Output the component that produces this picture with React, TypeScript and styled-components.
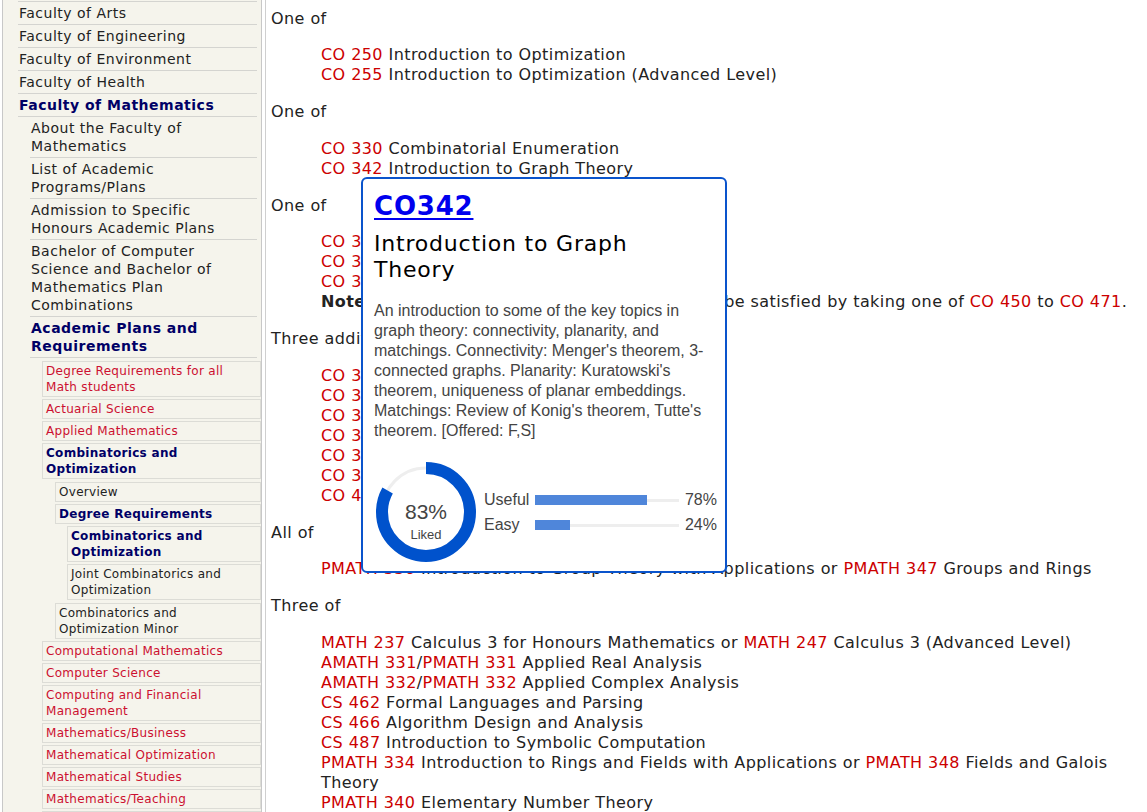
import React from "react";
import styled, { createGlobalStyle, css } from "styled-components";

const GlobalStyle = createGlobalStyle`
  html, body { margin: 0; padding: 0; background: #fff; }
  body {
    font-family: "DejaVu Sans", Verdana, sans-serif;
    color: #222;
    overflow: hidden;
  }
`;

type Variant = "plain" | "active" | "link";
interface NavNode {
  label: string;
  variant: Variant;
  children?: NavNode[];
}

const red = (label: string): NavNode => ({ label, variant: "link" });
const plain = (label: string): NavNode => ({ label, variant: "plain" });

const NAV: NavNode[] = [
  plain("Faculty of Arts"),
  plain("Faculty of Engineering"),
  plain("Faculty of Environment"),
  plain("Faculty of Health"),
  {
    label: "Faculty of Mathematics",
    variant: "active",
    children: [
      plain("About the Faculty of Mathematics"),
      plain("List of Academic Programs/Plans"),
      plain("Admission to Specific Honours Academic Plans"),
      plain("Bachelor of Computer Science and Bachelor of Mathematics Plan Combinations"),
      {
        label: "Academic Plans and Requirements",
        variant: "active",
        children: [
          red("Degree Requirements for all Math students"),
          red("Actuarial Science"),
          red("Applied Mathematics"),
          {
            label: "Combinatorics and Optimization",
            variant: "active",
            children: [
              plain("Overview"),
              {
                label: "Degree Requirements",
                variant: "active",
                children: [
                  { label: "Combinatorics and Optimization", variant: "active" },
                  plain("Joint Combinatorics and Optimization"),
                ],
              },
              plain("Combinatorics and Optimization Minor"),
            ],
          },
          red("Computational Mathematics"),
          red("Computer Science"),
          red("Computing and Financial Management"),
          red("Mathematics/Business"),
          red("Mathematical Optimization"),
          red("Mathematical Studies"),
          red("Mathematics/Teaching"),
          red("Pure Mathematics"),
          red("Statistics"),
        ],
      },
    ],
  },
];

type Seg = { c?: string; t?: string; b?: string };
interface Block {
  head: string;
  lines: Seg[][];
}

const BLOCKS: Block[] = [
  {
    head: "One of",
    lines: [
      [{ c: "CO 250" }, { t: " Introduction to Optimization" }],
      [{ c: "CO 255" }, { t: " Introduction to Optimization (Advanced Level)" }],
    ],
  },
  {
    head: "One of",
    lines: [
      [{ c: "CO 330" }, { t: " Combinatorial Enumeration" }],
      [{ c: "CO 342" }, { t: " Introduction to Graph Theory" }],
    ],
  },
  {
    head: "One of",
    lines: [
      [{ c: "CO 351" }, { t: " Network Flow Theory" }],
      [{ c: "CO 353" }, { t: " Computational Discrete Optimization" }],
      [{ c: "CO 367" }, { t: " Nonlinear Optimization" }],
      [
        { b: "Note:" },
        { t: " The requirement for this group may also be satisfied by taking one of " },
        { c: "CO 450" },
        { t: " to " },
        { c: "CO 471" },
        { t: "." },
      ],
    ],
  },
  {
    head: "Three additional courses chosen from:",
    lines: [
      [{ c: "CO 331" }, { t: " Coding Theory" }],
      [{ c: "CO 351" }, { t: " Network Flow Theory" }],
      [{ c: "CO 353" }, { t: " Computational Discrete Optimization" }],
      [{ c: "CO 367" }, { t: " Nonlinear Optimization" }],
      [{ c: "CO 370" }, { t: " Deterministic OR Models" }],
      [{ c: "CO 372" }, { t: " Portfolio Optimization Models" }],
      [{ c: "CO 400" }, { t: "- or 500-level courses" }],
    ],
  },
  {
    head: "All of",
    lines: [
      [
        { c: "PMATH 336" },
        { t: " Introduction to Group Theory with Applications or " },
        { c: "PMATH 347" },
        { t: " Groups and Rings" },
      ],
    ],
  },
  {
    head: "Three of",
    lines: [
      [
        { c: "MATH 237" },
        { t: " Calculus 3 for Honours Mathematics or " },
        { c: "MATH 247" },
        { t: " Calculus 3 (Advanced Level)" },
      ],
      [{ c: "AMATH 331" }, { t: "/" }, { c: "PMATH 331" }, { t: " Applied Real Analysis" }],
      [{ c: "AMATH 332" }, { t: "/" }, { c: "PMATH 332" }, { t: " Applied Complex Analysis" }],
      [{ c: "CS 462" }, { t: " Formal Languages and Parsing" }],
      [{ c: "CS 466" }, { t: " Algorithm Design and Analysis" }],
      [{ c: "CS 487" }, { t: " Introduction to Symbolic Computation" }],
      [
        { c: "PMATH 334" },
        { t: " Introduction to Rings and Fields with Applications or " },
        { c: "PMATH 348" },
        { t: " Fields and Galois Theory" },
      ],
      [{ c: "PMATH 340" }, { t: " Elementary Number Theory" }],
      [{ c: "PMATH 352" }, { t: " Complex Analysis" }],
    ],
  },
];

/* ---------- layout ---------- */

const Page = styled.div`
  display: flex;
  align-items: stretch;
  min-height: 812px;
`;

const Sidebar = styled.nav`
  flex: none;
  width: 260px;
  margin-left: 2px;
  box-sizing: border-box;
  padding-top: 1px;
  background: #f5f4ec;
  border-left: 1px solid #c8c8c8;
  border-right: 1px solid #c8c8c8;
`;

const NavList = styled.ul<{ $level: number }>`
  list-style: none;
  margin: 0;
  ${({ $level }) =>
    $level === 1
      ? css`
          padding: 0 4px 0 15px;
        `
      : $level === 2
      ? css`
          padding: 0 0 0 12px;
        `
      : $level === 3
      ? css`
          padding: 0 0 0 12px;
          margin: 3px -4px 0 0;
        `
      : $level === 4
      ? css`
          padding: 1px 0 0 13px;
        `
      : css`
          padding: 0 0 1px 12px;
        `}
`;

const NavItem = styled.li<{ $level: number }>`
  ${({ $level }) =>
    $level === 1 &&
    css`
      &:first-child > a {
        border-top: 1px solid #d4d4d0;
      }
    `}
`;

const NavLabel = styled.a<{ $level: number; $variant: Variant }>`
  display: block;
  text-decoration: none;
  cursor: pointer;
  color: ${({ $variant }) =>
    $variant === "active" ? "#000066" : $variant === "link" ? "#cc1030" : "#222"};
  font-weight: ${({ $variant }) => ($variant === "active" ? "bold" : "normal")};
  ${({ $level }) =>
    $level <= 2
      ? css`
          font-size: 14px;
          letter-spacing: 0.5px;
          line-height: 18px;
          padding: 2px ${$level === 2 ? 26 : 0}px 2px 1px;
          border-bottom: 1px solid #d4d4d0;
        `
      : css`
          font-size: 12px;
          letter-spacing: 0.3px;
          line-height: 16px;
          padding: 1px 3px;
          margin-bottom: 2px;
          border: 1px solid #dcdcd6;
        `}
`;

const NavTree: React.FC<{ nodes: NavNode[]; level: number }> = ({ nodes, level }) => (
  <NavList $level={level}>
    {nodes.map((n, i) => (
      <NavItem key={i} $level={level}>
        <NavLabel $level={level} $variant={n.variant}>
          {n.label}
        </NavLabel>
        {n.children && <NavTree nodes={n.children} level={level + 1} />}
      </NavItem>
    ))}
  </NavList>
);

const Main = styled.main`
  position: relative;
  flex: 1;
  margin-left: 3px;
  border-left: 1px solid #cfcfcf;
  padding: 7.5px 14px 0 5px;
  font-size: 16px;
  letter-spacing: 0.43px;
  color: #222;
`;

const Head = styled.p`
  margin: 16px 0;
  line-height: 21.5px;
  &:first-child {
    margin-top: 0;
  }
`;

const CourseList = styled.div`
  padding-left: 50px;
  line-height: 20px;
`;

const Line = styled.div``;

const Code = styled.a`
  color: #cc0000;
  text-decoration: none;
`;

const Strong = styled.b`
  font-weight: bold;
`;

/* ---------- popup ---------- */

const Card = styled.div`
  position: absolute;
  left: 95px;
  top: 177px;
  width: 366px;
  box-sizing: border-box;
  padding: 11px 6px 9px 11px;
  background: #fff;
  border: 2px solid #0a54cc;
  border-radius: 6px;
  letter-spacing: normal;
`;

const CardCode = styled.a`
  display: block;
  font: bold 26px/32px "DejaVu Sans", Verdana, sans-serif;
  letter-spacing: 0.8px;
  color: #0000ee;
  text-decoration: underline;
  text-decoration-thickness: 2px;
  text-underline-offset: 3px;
`;

const CardTitle = styled.h2`
  margin: 9px 0 0;
  max-width: 320px;
  font: normal 22px/26px "DejaVu Sans", Verdana, sans-serif;
  letter-spacing: 0.8px;
  color: #000;
`;

const CardDesc = styled.p`
  margin: 18px 0 0;
  font: 16px/20px "Liberation Sans", Arial, sans-serif;
  color: #444;
`;

const Stats = styled.div`
  display: flex;
  align-items: center;
  gap: 8px;
  margin-top: 21px;
  margin-left: 2px;
  font-family: "Liberation Sans", Arial, sans-serif;
  color: #444;
`;

const Donut = styled.div`
  position: relative;
  width: 100px;
  height: 100px;
  flex: none;
`;

const DonutText = styled.div`
  position: absolute;
  inset: 0;
  display: flex;
  flex-direction: column;
  align-items: center;
  padding-top: 38px;
  box-sizing: border-box;
`;

const DonutPct = styled.span`
  font-size: 21px;
  line-height: 24px;
`;

const DonutLabel = styled.span`
  margin-top: 3px;
  font-size: 13px;
  line-height: 16px;
`;

const Bars = styled.div`
  display: grid;
  grid-template-columns: 51px 144px 38px;
  row-gap: 5px;
  align-items: center;
  font-size: 16px;
  line-height: 20px;
`;

const BarTrack = styled.div`
  position: relative;
  height: 10px;
  &::before {
    content: "";
    position: absolute;
    left: 0;
    right: 0;
    top: 4px;
    height: 3px;
    background: #eeeeee;
  }
`;

const BarFill = styled.div`
  position: absolute;
  left: 0;
  top: 0;
  height: 10px;
  background: #4f86da;
`;

const Pct = styled.span`
  text-align: right;
`;

const STATS = [
  { label: "Useful", value: 78 },
  { label: "Easy", value: 24 },
];

const LIKED = 83;

const Popup: React.FC = () => {
  const r = 44;
  const c = 2 * Math.PI * r;
  return (
    <Card>
      <CardCode>CO342</CardCode>
      <CardTitle>Introduction to Graph Theory</CardTitle>
      <CardDesc>
        An introduction to some of the key topics in graph theory: connectivity, planarity, and
        matchings. Connectivity: Menger's theorem, 3-connected graphs. Planarity: Kuratowski's
        theorem, uniqueness of planar embeddings. Matchings: Review of Konig's theorem, Tutte's
        theorem. [Offered: F,S]
      </CardDesc>
      <Stats>
        <Donut>
          <svg width="100" height="100" viewBox="0 0 100 100">
            <circle cx="50" cy="50" r={r} fill="none" stroke="#eeeeee" strokeWidth="3" />
            <circle
              cx="50"
              cy="50"
              r={r}
              fill="none"
              stroke="#0052cc"
              strokeWidth="12"
              strokeDasharray={`${(c * LIKED) / 100} ${c}`}
              transform="rotate(-90 50 50)"
            />
          </svg>
          <DonutText>
            <DonutPct>{LIKED}%</DonutPct>
            <DonutLabel>Liked</DonutLabel>
          </DonutText>
        </Donut>
        <Bars>
          {STATS.map((s) => (
            <React.Fragment key={s.label}>
              <span>{s.label}</span>
              <BarTrack>
                <BarFill style={{ width: `${s.value}%` }} />
              </BarTrack>
              <Pct>{s.value}%</Pct>
            </React.Fragment>
          ))}
        </Bars>
      </Stats>
    </Card>
  );
};

const renderSeg = (s: Seg, i: number) =>
  s.c ? <Code key={i}>{s.c}</Code> : s.b ? <Strong key={i}>{s.b}</Strong> : <span key={i}>{s.t}</span>;

export default function App() {
  return (
    <>
      <GlobalStyle />
      <Page>
        <Sidebar>
          <NavTree nodes={NAV} level={1} />
        </Sidebar>
        <Main>
          {BLOCKS.map((b, i) => (
            <React.Fragment key={i}>
              <Head>{b.head}</Head>
              <CourseList>
                {b.lines.map((l, j) => (
                  <Line key={j}>{l.map(renderSeg)}</Line>
                ))}
              </CourseList>
            </React.Fragment>
          ))}
          <Popup />
        </Main>
      </Page>
    </>
  );
}
